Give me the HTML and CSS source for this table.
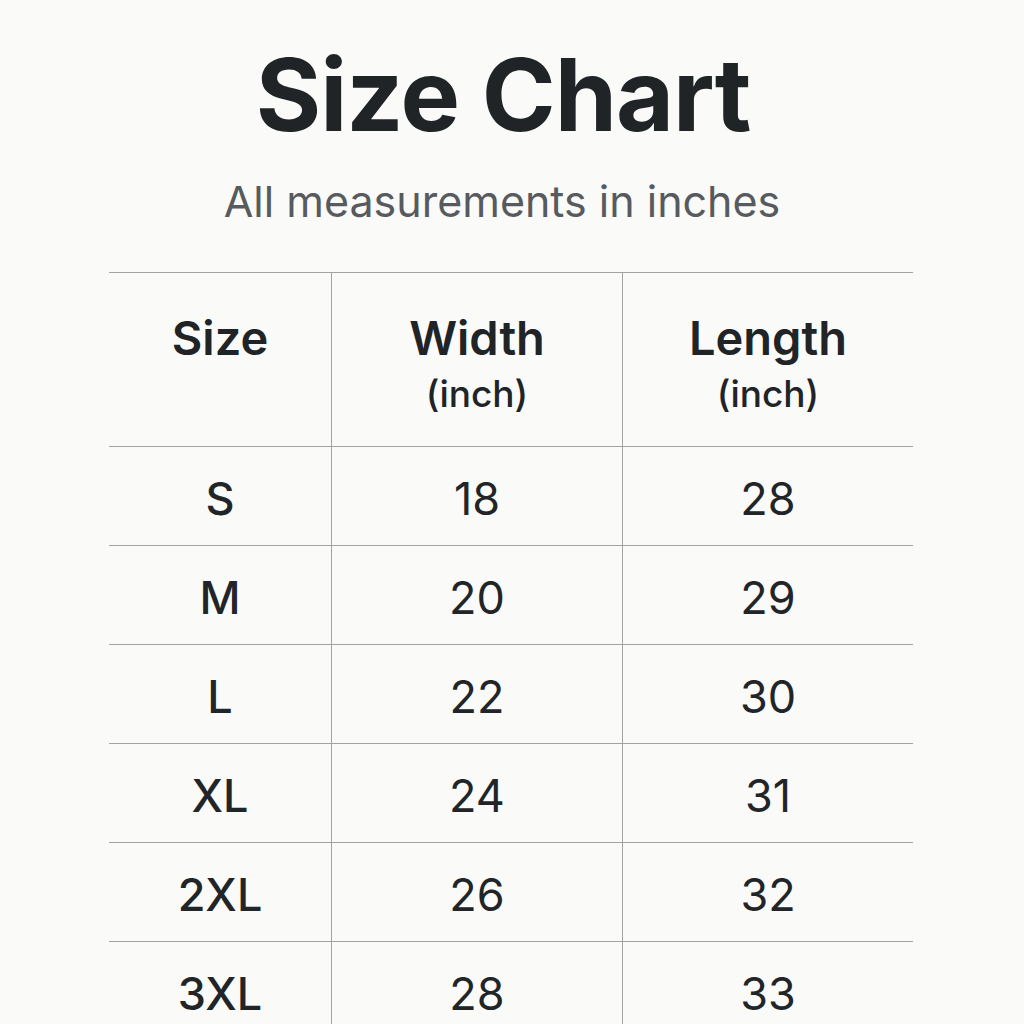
FILE: index.html
```html
<!DOCTYPE html>
<html lang="en">
<head>
<meta charset="utf-8">
<title>Size Chart</title>
<link rel="stylesheet" href="styles.css">
</head>
<body>
<main class="page">
  <h1 class="title">Size Chart</h1>
  <p class="subtitle">All measurements in inches</p>
  <table class="chart">
    <thead>
      <tr>
        <th class="col-size">Size</th>
        <th class="col-w">Width<span class="unit">(inch)</span></th>
        <th class="col-l">Length<span class="unit">(inch)</span></th>
      </tr>
    </thead>
    <tbody>
      <tr><td class="sz">S</td><td>18</td><td>28</td></tr>
      <tr><td class="sz">M</td><td>20</td><td>29</td></tr>
      <tr><td class="sz">L</td><td>22</td><td>30</td></tr>
      <tr><td class="sz">XL</td><td>24</td><td>31</td></tr>
      <tr><td class="sz">2XL</td><td>26</td><td>32</td></tr>
      <tr><td class="sz">3XL</td><td>28</td><td>33</td></tr>
    </tbody>
  </table>
</main>
</body>
</html>
```
FILE: styles.css
```css
html, body {
  margin: 0;
  padding: 0;
  background: #fafaf9;
}
body {
  font-family: Inter, "Noto Sans", sans-serif;
  color: #222528;
  overflow: hidden;
  height: 1024px;
}
.page {
  display: flex;
  flex-direction: column;
  align-items: center;
  padding-top: 40px;
}
.title {
  margin: 0 18px 0 0;
  font-size: 100px;
  font-weight: 700;
  line-height: 110px;
  letter-spacing: -1px;
  color: #212427;
}
.subtitle {
  margin: 26px 20px 0 0;
  font-size: 43px;
  line-height: 50px;
  font-weight: 400;
  color: #575a5e;
}
.chart {
  margin-top: 46px;
  margin-left: -2px;
  width: 802px;
  border-collapse: collapse;
  table-layout: fixed;
}
.chart th, .chart td {
  text-align: center;
  vertical-align: middle;
  border-top: 1.5px solid #a3a3a3;
  border-left: 1.5px solid #a3a3a3;
  padding: 0;
}
.chart th:first-child, .chart td:first-child {
  border-left: none;
}
.col-size { width: 222px; }
.col-w { width: 290px; }
.col-l { width: 290px; }
.chart thead tr { height: 174px; }
.chart th {
  vertical-align: top;
  padding-top: 37px;
  font-size: 47px;
  font-weight: 600;
  line-height: 56px;
  color: #212427;
}
.unit {
  display: block;
  margin-top: 6px;
  font-size: 37px;
  line-height: 44px;
  font-weight: 500;
}
.chart tbody tr { height: 99px; }
.chart td {
  padding-top: 6px;
  font-size: 45px;
  font-weight: 400;
  line-height: 50px;
}
.chart td.sz {
  font-weight: 500;
}
```
